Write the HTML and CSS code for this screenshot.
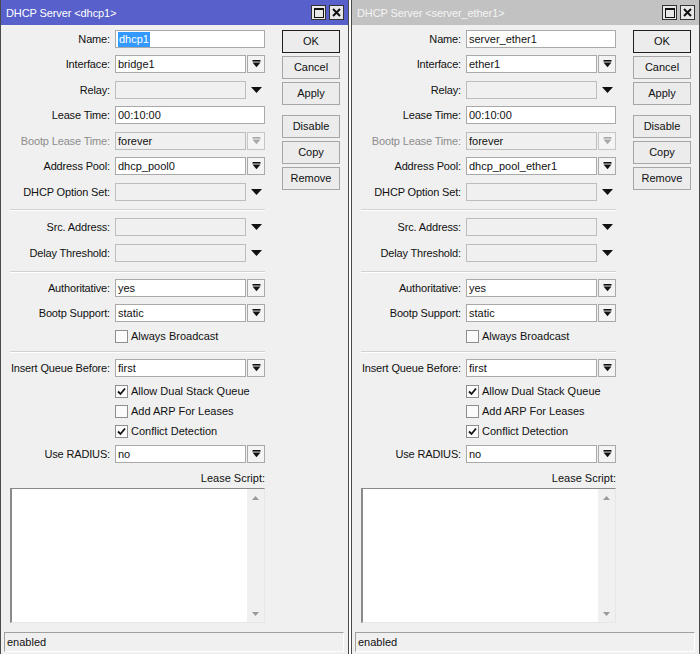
FILE: index.html
```html
<!DOCTYPE html>
<html>
<head>
<meta charset="utf-8">
<link rel="stylesheet" href="styles.css">
<title>DHCP Server</title>
</head>
<body>
<div class="desktop">

  <!-- LEFT WINDOW -->
  <div class="window">
    <div class="titlebar active">
      <span class="title">DHCP Server &lt;dhcp1&gt;</span>
      <span class="tbtns">
        <span class="tbtn"><svg width="10" height="10" viewBox="0 0 10 10"><rect x="0.5" y="0.5" width="9" height="9" fill="none" stroke="#111" stroke-width="1"/><rect x="0" y="0" width="10" height="2" fill="#111"/></svg></span>
        <span class="tbtn"><svg width="9" height="9" viewBox="0 0 9 9"><path d="M1 1L8 8M8 1L1 8" stroke="#111" stroke-width="2"/></svg></span>
      </span>
    </div>
    <div class="body">
      <div class="form">
        <div class="row first"><span class="label">Name:</span><div class="field"><span class="input"><span class="sel">dhcp1</span></span></div></div>
        <div class="row"><span class="label">Interface:</span><div class="field"><span class="input dd">bridge1</span><span class="ddbtn"><svg width="9" height="8" viewBox="0 0 9 8"><rect x="0.5" y="0" width="8" height="1.6"/><path d="M0.5 2.6H8.5L4.5 7.2Z"/></svg></span></div></div>
        <div class="row"><span class="label">Relay:</span><div class="field"><span class="input dd off"></span><span class="ddarrow"><svg width="11" height="6" viewBox="0 0 11 6"><path d="M0 0H11L5.5 6Z"/></svg></span></div></div>
        <div class="row"><span class="label">Lease Time:</span><div class="field"><span class="input">00:10:00</span></div></div>
        <div class="row"><span class="label dim">Bootp Lease Time:</span><div class="field"><span class="input dd off">forever</span><span class="ddbtn off"><svg width="9" height="8" viewBox="0 0 9 8" fill="#a8a8a8"><rect x="0.5" y="0" width="8" height="1.6"/><path d="M0.5 2.6H8.5L4.5 7.2Z"/></svg></span></div></div>
        <div class="row"><span class="label">Address Pool:</span><div class="field"><span class="input dd">dhcp_pool0</span><span class="ddbtn"><svg width="9" height="8" viewBox="0 0 9 8"><rect x="0.5" y="0" width="8" height="1.6"/><path d="M0.5 2.6H8.5L4.5 7.2Z"/></svg></span></div></div>
        <div class="row"><span class="label">DHCP Option Set:</span><div class="field"><span class="input dd off"></span><span class="ddarrow"><svg width="11" height="6" viewBox="0 0 11 6"><path d="M0 0H11L5.5 6Z"/></svg></span></div></div>

        <div class="sep sep1"></div>

        <div class="row r-src"><span class="label">Src. Address:</span><div class="field"><span class="input dd off"></span><span class="ddarrow"><svg width="11" height="6" viewBox="0 0 11 6"><path d="M0 0H11L5.5 6Z"/></svg></span></div></div>
        <div class="row r-delay"><span class="label">Delay Threshold:</span><div class="field"><span class="input dd off"></span><span class="ddarrow"><svg width="11" height="6" viewBox="0 0 11 6"><path d="M0 0H11L5.5 6Z"/></svg></span></div></div>

        <div class="sep sep2"></div>

        <div class="row r-auth"><span class="label">Authoritative:</span><div class="field"><span class="input dd">yes</span><span class="ddbtn"><svg width="9" height="8" viewBox="0 0 9 8"><rect x="0.5" y="0" width="8" height="1.6"/><path d="M0.5 2.6H8.5L4.5 7.2Z"/></svg></span></div></div>
        <div class="row r-bsup"><span class="label">Bootp Support:</span><div class="field"><span class="input dd">static</span><span class="ddbtn"><svg width="9" height="8" viewBox="0 0 9 8"><rect x="0.5" y="0" width="8" height="1.6"/><path d="M0.5 2.6H8.5L4.5 7.2Z"/></svg></span></div></div>
        <div class="check c-always"><span class="box"></span><span>Always Broadcast</span></div>

        <div class="sep sep3"></div>

        <div class="row r-insert"><span class="label">Insert Queue Before:</span><div class="field"><span class="input dd">first</span><span class="ddbtn"><svg width="9" height="8" viewBox="0 0 9 8"><rect x="0.5" y="0" width="8" height="1.6"/><path d="M0.5 2.6H8.5L4.5 7.2Z"/></svg></span></div></div>
        <div class="check c-dual"><span class="box"><svg width="9" height="9" viewBox="0 0 9 9"><path d="M1 4.5L3.5 7L8 1.5" fill="none" stroke="#111" stroke-width="1.8"/></svg></span><span>Allow Dual Stack Queue</span></div>
        <div class="check c-arp"><span class="box"></span><span>Add ARP For Leases</span></div>
        <div class="check c-arp"><span class="box"><svg width="9" height="9" viewBox="0 0 9 9"><path d="M1 4.5L3.5 7L8 1.5" fill="none" stroke="#111" stroke-width="1.8"/></svg></span><span>Conflict Detection</span></div>
        <div class="row r-radius"><span class="label">Use RADIUS:</span><div class="field"><span class="input dd">no</span><span class="ddbtn"><svg width="9" height="8" viewBox="0 0 9 8"><rect x="0.5" y="0" width="8" height="1.6"/><path d="M0.5 2.6H8.5L4.5 7.2Z"/></svg></span></div></div>
        <div class="scriptlabel">Lease Script:</div>
        <div class="textarea">
          <div class="ta-text"></div>
          <div class="scrollbar">
            <svg width="7" height="4" viewBox="0 0 7 4"><path d="M0 4H7L3.5 0Z"/></svg>
            <svg width="7" height="4" viewBox="0 0 7 4"><path d="M0 0H7L3.5 4Z"/></svg>
          </div>
        </div>
      </div>
      <div class="buttons">
        <div class="btn default">OK</div>
        <div class="btn">Cancel</div>
        <div class="btn">Apply</div>
        <div class="btn gap">Disable</div>
        <div class="btn">Copy</div>
        <div class="btn">Remove</div>
      </div>
    </div>
    <div class="status">enabled</div>
  </div>

  <!-- RIGHT WINDOW -->
  <div class="window">
    <div class="titlebar inactive">
      <span class="title">DHCP Server &lt;server_ether1&gt;</span>
      <span class="tbtns">
        <span class="tbtn"><svg width="10" height="10" viewBox="0 0 10 10"><rect x="0.5" y="0.5" width="9" height="9" fill="none" stroke="#111" stroke-width="1"/><rect x="0" y="0" width="10" height="2" fill="#111"/></svg></span>
        <span class="tbtn"><svg width="9" height="9" viewBox="0 0 9 9"><path d="M1 1L8 8M8 1L1 8" stroke="#111" stroke-width="2"/></svg></span>
      </span>
    </div>
    <div class="body">
      <div class="form">
        <div class="row first"><span class="label">Name:</span><div class="field"><span class="input">server_ether1</span></div></div>
        <div class="row"><span class="label">Interface:</span><div class="field"><span class="input dd">ether1</span><span class="ddbtn"><svg width="9" height="8" viewBox="0 0 9 8"><rect x="0.5" y="0" width="8" height="1.6"/><path d="M0.5 2.6H8.5L4.5 7.2Z"/></svg></span></div></div>
        <div class="row"><span class="label">Relay:</span><div class="field"><span class="input dd off"></span><span class="ddarrow"><svg width="11" height="6" viewBox="0 0 11 6"><path d="M0 0H11L5.5 6Z"/></svg></span></div></div>
        <div class="row"><span class="label">Lease Time:</span><div class="field"><span class="input">00:10:00</span></div></div>
        <div class="row"><span class="label dim">Bootp Lease Time:</span><div class="field"><span class="input dd off">forever</span><span class="ddbtn off"><svg width="9" height="8" viewBox="0 0 9 8" fill="#a8a8a8"><rect x="0.5" y="0" width="8" height="1.6"/><path d="M0.5 2.6H8.5L4.5 7.2Z"/></svg></span></div></div>
        <div class="row"><span class="label">Address Pool:</span><div class="field"><span class="input dd">dhcp_pool_ether1</span><span class="ddbtn"><svg width="9" height="8" viewBox="0 0 9 8"><rect x="0.5" y="0" width="8" height="1.6"/><path d="M0.5 2.6H8.5L4.5 7.2Z"/></svg></span></div></div>
        <div class="row"><span class="label">DHCP Option Set:</span><div class="field"><span class="input dd off"></span><span class="ddarrow"><svg width="11" height="6" viewBox="0 0 11 6"><path d="M0 0H11L5.5 6Z"/></svg></span></div></div>

        <div class="sep sep1"></div>

        <div class="row r-src"><span class="label">Src. Address:</span><div class="field"><span class="input dd off"></span><span class="ddarrow"><svg width="11" height="6" viewBox="0 0 11 6"><path d="M0 0H11L5.5 6Z"/></svg></span></div></div>
        <div class="row r-delay"><span class="label">Delay Threshold:</span><div class="field"><span class="input dd off"></span><span class="ddarrow"><svg width="11" height="6" viewBox="0 0 11 6"><path d="M0 0H11L5.5 6Z"/></svg></span></div></div>

        <div class="sep sep2"></div>

        <div class="row r-auth"><span class="label">Authoritative:</span><div class="field"><span class="input dd">yes</span><span class="ddbtn"><svg width="9" height="8" viewBox="0 0 9 8"><rect x="0.5" y="0" width="8" height="1.6"/><path d="M0.5 2.6H8.5L4.5 7.2Z"/></svg></span></div></div>
        <div class="row r-bsup"><span class="label">Bootp Support:</span><div class="field"><span class="input dd">static</span><span class="ddbtn"><svg width="9" height="8" viewBox="0 0 9 8"><rect x="0.5" y="0" width="8" height="1.6"/><path d="M0.5 2.6H8.5L4.5 7.2Z"/></svg></span></div></div>
        <div class="check c-always"><span class="box"></span><span>Always Broadcast</span></div>

        <div class="sep sep3"></div>

        <div class="row r-insert"><span class="label">Insert Queue Before:</span><div class="field"><span class="input dd">first</span><span class="ddbtn"><svg width="9" height="8" viewBox="0 0 9 8"><rect x="0.5" y="0" width="8" height="1.6"/><path d="M0.5 2.6H8.5L4.5 7.2Z"/></svg></span></div></div>
        <div class="check c-dual"><span class="box"><svg width="9" height="9" viewBox="0 0 9 9"><path d="M1 4.5L3.5 7L8 1.5" fill="none" stroke="#111" stroke-width="1.8"/></svg></span><span>Allow Dual Stack Queue</span></div>
        <div class="check c-arp"><span class="box"></span><span>Add ARP For Leases</span></div>
        <div class="check c-arp"><span class="box"><svg width="9" height="9" viewBox="0 0 9 9"><path d="M1 4.5L3.5 7L8 1.5" fill="none" stroke="#111" stroke-width="1.8"/></svg></span><span>Conflict Detection</span></div>
        <div class="row r-radius"><span class="label">Use RADIUS:</span><div class="field"><span class="input dd">no</span><span class="ddbtn"><svg width="9" height="8" viewBox="0 0 9 8"><rect x="0.5" y="0" width="8" height="1.6"/><path d="M0.5 2.6H8.5L4.5 7.2Z"/></svg></span></div></div>
        <div class="scriptlabel">Lease Script:</div>
        <div class="textarea">
          <div class="ta-text"></div>
          <div class="scrollbar">
            <svg width="7" height="4" viewBox="0 0 7 4"><path d="M0 4H7L3.5 0Z"/></svg>
            <svg width="7" height="4" viewBox="0 0 7 4"><path d="M0 0H7L3.5 4Z"/></svg>
          </div>
        </div>
      </div>
      <div class="buttons">
        <div class="btn default">OK</div>
        <div class="btn">Cancel</div>
        <div class="btn">Apply</div>
        <div class="btn gap">Disable</div>
        <div class="btn">Copy</div>
        <div class="btn">Remove</div>
      </div>
    </div>
    <div class="status">enabled</div>
  </div>

</div>
</body>
</html>
```
FILE: styles.css
```css
* { box-sizing: border-box; }

body {
  margin: 0;
  background: #ffffff;
  font-family: "Liberation Sans", Arial, sans-serif;
  font-size: 11px;
  color: #111;
}

.desktop {
  display: flex;
  gap: 2px;
  width: 700px;
  height: 654px;
  overflow: hidden;
}

.window {
  width: 349px;
  height: 654px;
  background: #f0f0f0;
  border-left: 1px solid #4a4a4a;
  border-right: 1px solid #4a4a4a;
  display: flex;
  flex-direction: column;
}

.titlebar {
  height: 25px;
  flex: none;
  display: flex;
  align-items: center;
  justify-content: space-between;
  padding: 0 4px 0 5px;
  font-size: 11px;
  letter-spacing: -0.1px;
}
.titlebar.active { background: #5860cb; color: #ffffff; }
.titlebar.inactive { background: #c2c2c2; color: #f4f4f4; }

.tbtns { display: flex; gap: 3px; }
.tbtn {
  width: 15px;
  height: 15px;
  border: 1px solid #333;
  background: #e8e8e8;
  display: flex;
  align-items: center;
  justify-content: center;
}

.body {
  display: flex;
  padding: 4.5px 0 0 9px;
}

.form {
  width: 255px;
  display: flex;
  flex-direction: column;
}

.row {
  display: flex;
  align-items: center;
  height: 18px;
  margin-top: 7.5px;
}
.row.first { margin-top: 0; }
.row.r-src { margin-top: 7px; }
.row.r-delay { margin-top: 8px; }
.row.r-auth { margin-top: 6px; }
.row.r-bsup { margin-top: 7px; }
.row.r-insert { margin-top: 6px; }
.row.r-radius { margin-top: 6.5px; }

.label {
  width: 100px;
  text-align: right;
  white-space: nowrap;
  letter-spacing: -0.15px;
}
.label.dim { color: #8d8d8d; }

.field {
  margin-left: 5px;
  width: 150px;
  height: 18px;
  display: flex;
  gap: 1px;
}

.input {
  flex: 1;
  height: 18px;
  background: #ffffff;
  border: 1px solid #a9a9a9;
  padding: 0 2px 0 2px;
  line-height: 16px;
  white-space: nowrap;
  overflow: hidden;
}
.input.dd { flex: none; width: 131px; }
.input.off { background: #f0f0f0; border-color: #bdbdbd; }

.sel {
  background: #3399ff;
  color: #ffffff;
  padding: 0 1px;
  display: inline-block;
  line-height: 15px;
}

.ddbtn {
  width: 18px;
  height: 18px;
  border: 1px solid #a9a9a9;
  background: #f4f4f4;
  display: flex;
  align-items: center;
  justify-content: center;
  fill: #111;
}
.ddbtn.off { border-color: #c6c6c6; }

.ddarrow {
  width: 18px;
  height: 18px;
  display: flex;
  align-items: center;
  justify-content: center;
  fill: #111;
}

.sep {
  height: 2px;
  border-top: 1px solid #d2d2d2;
  border-bottom: 1px solid #ffffff;
}
.sep1 { margin-top: 8.5px; }
.sep2 { margin-top: 9px; }
.sep3 { margin-top: 7.5px; }

.check {
  display: flex;
  align-items: center;
  height: 15px;
  padding-left: 105px;
  gap: 3px;
  margin-top: 5px;
}
.check.c-always { margin-top: 6.5px; }
.check.c-dual { margin-top: 6.5px; }

.box {
  width: 13px;
  height: 13px;
  border: 1px solid #8e8e8e;
  background: #fbfbfb;
  display: flex;
  align-items: center;
  justify-content: center;
}

.scriptlabel {
  margin-top: 8px;
  height: 14px;
  line-height: 14px;
  text-align: right;
}

.textarea {
  margin-top: 3px;
  height: 135px;
  display: flex;
  background: #ffffff;
  border-top: 1px solid #8a8a8a;
  border-left: 2px solid #8a8a8a;
  border-right: 1px solid #e6e6e6;
  border-bottom: 1px solid #e6e6e6;
}
.ta-text { flex: 1; }
.scrollbar {
  width: 17px;
  background: #f0f0f0;
  display: flex;
  flex-direction: column;
  align-items: center;
  justify-content: space-between;
  padding: 7px 0 6px;
  fill: #9a9a9a;
}

.buttons {
  margin-left: 17px;
  width: 58px;
  display: flex;
  flex-direction: column;
}

.btn {
  height: 23px;
  margin-top: 3px;
  border: 1px solid #a6a6a6;
  background: #ececec;
  text-align: center;
  line-height: 21px;
  font-size: 11px;
}
.btn.default { margin-top: 0; border-color: #1e1e1e; }
.btn.gap { margin-top: 10px; }

.status {
  margin: 9px 4px 0 3px;
  height: 20px;
  border-top: 1px solid #a0a0a0;
  border-left: 1px solid #a0a0a0;
  border-right: 1px solid #ffffff;
  border-bottom: 1px solid #ffffff;
  padding-left: 2px;
  line-height: 18px;
}
```
